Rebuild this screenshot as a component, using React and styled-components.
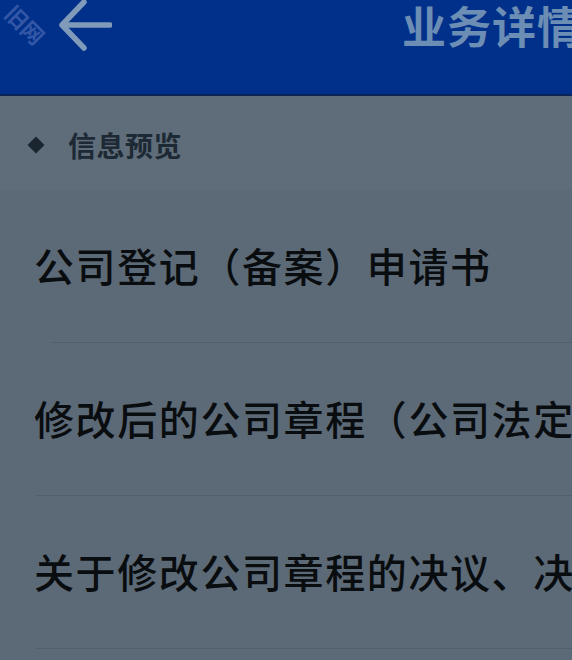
import React from "react";
import styled, { createGlobalStyle } from "styled-components";

const Global = createGlobalStyle`
  html, body { margin: 0; padding: 0; background: #5c6a77; }
  body { font-family: "Noto Sans CJK SC", "Noto Sans", sans-serif; }
`;

const Page = styled.div`
  position: relative;
  width: 572px;
  height: 660px;
  overflow: hidden;
  background: #5c6a77;
`;

const Header = styled.header`
  display: flex;
  align-items: flex-start;
  height: 94px;
  background: #00308a;
  border-bottom: 2px solid #0b2457;
  white-space: nowrap;
`;

const BackButton = styled.div`
  display: flex;
  margin: 0 0 0 58px;
  width: 54px;
  height: 54px;
`;

const Title = styled.h1`
  margin: 0 0 0 290px;
  font-size: 44px;
  line-height: 50px;
  font-weight: 700;
  letter-spacing: 1px;
  color: #6c8db4;
`;

const Watermark = styled.div`
  position: absolute;
  left: 4px;
  top: 8px;
  transform: rotate(45deg);
  font-size: 22px;
  font-weight: 700;
  color: #3c5eac;
  opacity: 0.85;
`;

const Section = styled.div`
  display: flex;
  align-items: center;
  height: 94px;
  padding-left: 30px;
  padding-top: 4px;
  box-sizing: border-box;
  background: #5e6d79;
`;

const Diamond = styled.span`
  width: 12px;
  height: 12px;
  background: #1a2530;
  transform: rotate(45deg);
  margin-right: 26px;
`;

const SectionTitle = styled.span`
  font-size: 28px;
  font-weight: 700;
  color: #1d2934;
  letter-spacing: 0.5px;
`;

const List = styled.div`
  display: flex;
  flex-direction: column;
`;

const Row = styled.div`
  display: flex;
  align-items: center;
  height: 153px;
  padding-left: 34px;
  padding-bottom: 4px;
  box-sizing: border-box;
  white-space: nowrap;
  position: relative;
  &::after {
    content: "";
    position: absolute;
    bottom: 0;
    left: ${(p) => p.$inset}px;
    right: 0;
    height: 1px;
    background: #52606c;
  }
`;

const RowText = styled.span`
  font-size: 40px;
  font-weight: 500;
  letter-spacing: 1.6px;
  color: #0a0d10;
`;

const rows = [
  { text: "公司登记（备案）申请书", inset: 50 },
  { text: "修改后的公司章程（公司法定代表人签署）", inset: 36 },
  { text: "关于修改公司章程的决议、决定", inset: 36 },
];

export default function App() {
  return (
    <>
      <Global />
      <Page>
        <Header>
          <BackButton>
            <svg width="54" height="54" viewBox="0 0 54 54">
              <path
                d="M26 2 L4 25 L26 48 M4 25 H52"
                fill="none"
                stroke="#7f9bb9"
                strokeWidth="5.5"
                strokeLinecap="round"
                strokeLinejoin="round"
              />
            </svg>
          </BackButton>
          <Title>业务详情</Title>
        </Header>
        <Watermark>旧网</Watermark>
        <Section>
          <Diamond />
          <SectionTitle>信息预览</SectionTitle>
        </Section>
        <List>
          {rows.map((r) => (
            <Row key={r.text} $inset={r.inset}>
              <RowText>{r.text}</RowText>
            </Row>
          ))}
        </List>
      </Page>
    </>
  );
}
